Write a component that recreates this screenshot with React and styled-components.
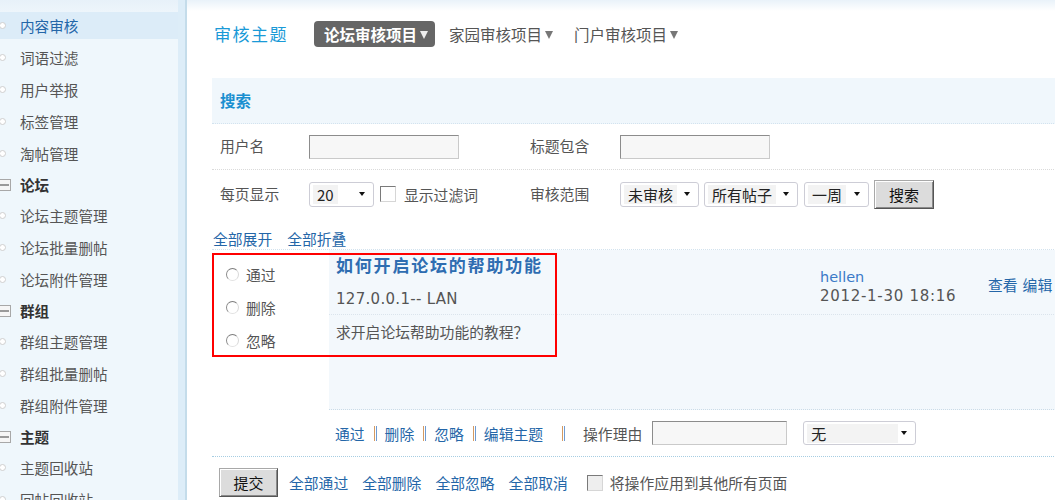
import React from "react";
import styled, { createGlobalStyle } from "styled-components";

const GlobalStyle = createGlobalStyle`
  html, body {
    margin: 0;
    padding: 0;
    background: #fff;
    overflow: hidden;
  }
  body {
    font-family: "Noto Sans CJK SC", "Liberation Sans", sans-serif;
    font-size: 14.8px;
    color: #555;
  }
`;

const sideMenu = [
  { type: "item", label: "内容审核", active: true },
  { type: "item", label: "词语过滤" },
  { type: "item", label: "用户举报" },
  { type: "item", label: "标签管理" },
  { type: "item", label: "淘帖管理" },
  { type: "group", label: "论坛" },
  { type: "item", label: "论坛主题管理" },
  { type: "item", label: "论坛批量删帖" },
  { type: "item", label: "论坛附件管理" },
  { type: "group", label: "群组" },
  { type: "item", label: "群组主题管理" },
  { type: "item", label: "群组批量删帖" },
  { type: "item", label: "群组附件管理" },
  { type: "group", label: "主题" },
  { type: "item", label: "主题回收站" },
  { type: "item", label: "回帖回收站" },
];

const App = () => {
  return (
    <>
      <GlobalStyle />
      <Page>
        <Sidebar>
          {sideMenu.map((m) =>
            m.type === "group" ? (
              <MenuGroup key={m.label}>{m.label}</MenuGroup>
            ) : (
              <MenuItem key={m.label} $active={m.active}>
                {m.label}
              </MenuItem>
            )
          )}
        </Sidebar>
        <SideEdge />
        <Main>
          <Content>
            <HeaderRow>
              <PageTitle>审核主题</PageTitle>
              <Tab $active>
                论坛审核项目<Caret $active />
              </Tab>
              <Tab>
                家园审核项目<Caret />
              </Tab>
              <Tab>
                门户审核项目<Caret />
              </Tab>
            </HeaderRow>

            <SearchHead>搜索</SearchHead>
            <FormRow $h={45} $line>
              <Label>用户名</Label>
              <div>
                <TextInput $w={150} />
              </div>
              <Label>标题包含</Label>
              <div>
                <TextInput $w={150} />
              </div>
            </FormRow>
            <FormRow $h={48}>
              <Label>每页显示</Label>
              <Inline>
                <Select $w={65}>
                  <SelectValue>20</SelectValue>
                  <Arrow />
                </Select>
                <Check $ml={6} />
                <CheckText>显示过滤词</CheckText>
              </Inline>
              <Label>审核范围</Label>
              <Inline>
                <Select $w={79}>
                  <SelectValue>未审核</SelectValue>
                  <Arrow />
                </Select>
                <Select $w={94} $ml={5}>
                  <SelectValue>所有帖子</SelectValue>
                  <Arrow />
                </Select>
                <Select $w={65} $ml={6}>
                  <SelectValue>一周</SelectValue>
                  <Arrow />
                </Select>
                <Button $w={60} $ml={5}>
                  搜索
                </Button>
              </Inline>
            </FormRow>

            <ToggleRow>
              <Link>全部展开</Link>
              <Link>全部折叠</Link>
            </ToggleRow>

            <PostBlock>
              <RadioCol>
                <RadioRow>
                  <Radio />
                  通过
                </RadioRow>
                <RadioRow>
                  <Radio />
                  删除
                </RadioRow>
                <RadioRow>
                  <Radio />
                  忽略
                </RadioRow>
              </RadioCol>
              <PostBody>
                <PostTop>
                  <PostMain>
                    <PostTitle>如何开启论坛的帮助功能</PostTitle>
                    <PostIp>127.0.0.1-- LAN</PostIp>
                  </PostMain>
                  <AuthorCol>
                    <Author>hellen</Author>
                    <PostDate>2012-1-30 18:16</PostDate>
                  </AuthorCol>
                  <OpsCol>
                    <Link>查看</Link>
                    <Link>编辑</Link>
                  </OpsCol>
                </PostTop>
                <PostMessage>求开启论坛帮助功能的教程？</PostMessage>
              </PostBody>
              <Highlight />
            </PostBlock>

            <ActionRow>
              <Link>通过</Link>
              <Sep />
              <Link>删除</Link>
              <Sep />
              <Link>忽略</Link>
              <Sep />
              <Link>编辑主题</Link>
              <Sep $wide />
              <span>操作理由</span>
              <TextInput $w={135} $ml={10} />
              <Select $w={113} $ml={16} $h={24}>
                <SelectValue $grow>无</SelectValue>
                <Arrow />
              </Select>
            </ActionRow>

            <SubmitRow>
              <Button $w={59}>提交</Button>
              <Link>全部通过</Link>
              <Link>全部删除</Link>
              <Link>全部忽略</Link>
              <Link>全部取消</Link>
              <Check $ml={5} $grey />
              <CheckText $ml={-7}>将操作应用到其他所有页面</CheckText>
            </SubmitRow>
          </Content>
        </Main>
      </Page>
    </>
  );
};

// Layout
const Page = styled.div`
  display: flex;
  width: 1055px;
  height: 500px;
  overflow: hidden;
`;

const Sidebar = styled.aside`
  flex: 0 0 178px;
  height: 500px;
  box-sizing: border-box;
  padding-top: 12px;
  overflow: hidden;
  background: linear-gradient(#e7f1f9, #edf5fb 12px, #eff7fc 12px);
`;

const MenuItem = styled.div`
  position: relative;
  height: 27px;
  line-height: 27px;
  margin-bottom: 5px;
  padding-left: 20px;
  font-size: 14.6px;
  color: ${({ $active }) => ($active ? "#2366a8" : "#555")};
  background: ${({ $active }) => ($active ? "#dcecf8" : "transparent")};

  &::before {
    content: "";
    position: absolute;
    left: -1px;
    top: 10px;
    width: 5px;
    height: 5px;
    border: 1px solid #cfcfcf;
    border-radius: 50%;
    background: #fff;
  }
`;

const MenuGroup = styled.div`
  position: relative;
  height: 25px;
  line-height: 25px;
  margin-bottom: 5px;
  padding-left: 20px;
  font-size: 14.6px;
  font-weight: bold;
  color: #333;

  &::before {
    content: "";
    position: absolute;
    left: -2px;
    top: 7px;
    width: 11px;
    height: 10px;
    border: 1px solid #a8a8a8;
    background: #f6f6f6;
  }
  &::after {
    content: "";
    position: absolute;
    left: 0;
    top: 12px;
    width: 9px;
    height: 2px;
    background: #9a9a9a;
  }
`;

const SideEdge = styled.div`
  flex: 0 0 7px;
  background: #ddedf8;
  border-right: 2px solid #c4dcea;
`;

const Main = styled.main`
  flex: 1;
  min-width: 0;
  overflow: hidden;
  padding: 20px 0 0 25px;
  background: linear-gradient(#e9f2f9, #fff 11px);
`;

const Content = styled.div`
  width: 880px;
`;

// Header tabs
const HeaderRow = styled.div`
  display: flex;
  align-items: center;
  height: 27px;
  gap: 4px;
`;

const PageTitle = styled.h1`
  margin: 0 22px 0 2px;
  font-size: 17px;
  font-weight: normal;
  letter-spacing: 1.5px;
  color: #1a9ad7;
`;

const Tab = styled.div`
  display: flex;
  align-items: center;
  height: 26px;
  padding: 0 7px 0 10px;
  border-radius: 4px;
  font-size: 15.5px;
  font-weight: ${({ $active }) => ($active ? "bold" : "normal")};
  color: ${({ $active }) => ($active ? "#fff" : "#555")};
  background: ${({ $active }) => ($active ? "#666" : "transparent")};
`;

const Caret = styled.span`
  margin: 3px 0 0 3px;
  width: 0;
  height: 0;
  border-left: 4px solid transparent;
  border-right: 4px solid transparent;
  border-top: 8px solid ${({ $active }) => ($active ? "#eee" : "#777")};
`;

// Search form
const SearchHead = styled.div`
  margin-top: 31px;
  height: 45px;
  line-height: 45px;
  padding-left: 8px;
  background: #f0f7fc;
  border-bottom: 1px dotted #d3e3ef;
  font-size: 15.5px;
  font-weight: bold;
  color: #1a8fd0;
`;

const FormRow = styled.div`
  display: grid;
  grid-template-columns: 97px 213px 98px 1fr;
  align-items: center;
  height: ${({ $h }) => $h}px;
  border-bottom: ${({ $line }) => ($line ? "1px dotted #dadada" : "none")};
`;

const Label = styled.div`
  padding-left: 8px;
  margin-top: -2px;
`;

const Inline = styled.div`
  display: flex;
  align-items: center;
`;

const TextInput = styled.div`
  box-sizing: border-box;
  width: ${({ $w }) => $w}px;
  height: 24px;
  margin-left: ${({ $ml }) => $ml || 0}px;
  background: #f7f7f7;
  border: 1px solid;
  border-color: #8c8c8c #cacaca #cacaca #8c8c8c;
`;

const Select = styled.div`
  box-sizing: border-box;
  display: flex;
  align-items: center;
  justify-content: space-between;
  width: ${({ $w }) => $w}px;
  height: ${({ $h }) => $h || 25}px;
  margin-left: ${({ $ml }) => $ml || 0}px;
  padding: 0 8px 0 3px;
  background: #fff;
  border: 1px solid #cdcdd6;
  border-radius: 3px;
`;

const SelectValue = styled.span`
  flex: ${({ $grow }) => ($grow ? "0 0 83px" : "0 0 auto")};
  padding: 0 4px;
  line-height: 19px;
  font-size: 15px;
  color: #222;
  background: #f3f3f3;
`;

const Arrow = styled.span`
  width: 0;
  height: 0;
  border-left: 3.5px solid transparent;
  border-right: 3.5px solid transparent;
  border-top: 4px solid #111;
`;

const Check = styled.span`
  box-sizing: border-box;
  width: 16px;
  height: 16px;
  margin-left: ${({ $ml }) => $ml || 0}px;
  background: ${({ $grey }) => ($grey ? "#eeeeee" : "#fff")};
  border: 1px solid;
  border-color: #7a7a7a #d6d6d6 #d6d6d6 #7a7a7a;
`;

const CheckText = styled.span`
  margin-left: ${({ $ml }) => ($ml === undefined ? 8 : $ml)}px;
`;

const Button = styled.div`
  box-sizing: border-box;
  display: flex;
  align-items: center;
  justify-content: center;
  width: ${({ $w }) => $w}px;
  height: 29px;
  margin-left: ${({ $ml }) => $ml || 0}px;
  font-size: 15px;
  color: #111;
  background: #dcdcdc;
  border: 1px solid;
  border-color: #a8a8a8 #555 #555 #a8a8a8;
  box-shadow: inset 1px 1px #fff, inset -1px -1px #8a8a8a;
`;

const Link = styled.a`
  color: #2466a8;
  text-decoration: none;
  cursor: pointer;
`;

const ToggleRow = styled.div`
  display: flex;
  align-items: flex-end;
  gap: 15px;
  height: 31px;
  padding-left: 1px;
  line-height: 20px;
  border-bottom: 1px dotted #d2e2ee;
`;

// Post
const PostBlock = styled.div`
  position: relative;
  display: flex;
`;

const RadioCol = styled.div`
  flex: 0 0 117px;
  box-sizing: border-box;
  padding: 8px 0 0 14px;
`;

const RadioRow = styled.div`
  display: flex;
  align-items: center;
  height: 33px;
`;

const Radio = styled.span`
  box-sizing: border-box;
  width: 13px;
  height: 13px;
  margin-right: 7px;
  border-radius: 50%;
  background: #fff;
  border: 1px solid;
  border-color: #7d7d7d #d8d8d8 #e2e2e2 #8a8a8a;
`;

const PostBody = styled.div`
  flex: 1;
  background: #f3f8fc;
  border-bottom: 1px dotted #cadbe7;
`;

const PostTop = styled.div`
  display: flex;
  height: 64px;
  border-bottom: 1px dotted #dbe4ec;
`;

const PostMain = styled.div`
  flex: 0 0 491px;
  box-sizing: border-box;
  padding: 4px 0 0 7px;
`;

const PostTitle = styled.div`
  line-height: 22px;
  font-size: 17px;
  font-weight: bold;
  letter-spacing: 1.8px;
  color: #2e6db1;
`;

const PostIp = styled.div`
  margin-top: 12px;
  line-height: 22px;
  font-family: "DejaVu Sans", sans-serif;
  font-size: 15px;
  letter-spacing: 0.3px;
  color: #555;
`;

const AuthorCol = styled.div`
  flex: 0 0 168px;
  padding-top: 18px;
  font-family: "DejaVu Sans", sans-serif;
  line-height: 19px;
`;

const Author = styled.div`
  font-size: 14.5px;
  color: #3a7ac8;
`;

const PostDate = styled.div`
  font-size: 15px;
  letter-spacing: 0.7px;
  color: #555;
`;

const OpsCol = styled.div`
  display: flex;
  gap: 5px;
  padding-top: 25px;
  line-height: 20px;
`;

const PostMessage = styled.div`
  height: 94px;
  box-sizing: border-box;
  padding: 7px 7px;
  line-height: 20px;
  color: #555;
`;

const Highlight = styled.div`
  position: absolute;
  left: 0;
  top: 3px;
  width: 345px;
  height: 104px;
  box-sizing: border-box;
  border: 2px solid #f00;
  pointer-events: none;
`;

// Actions
const ActionRow = styled.div`
  display: flex;
  align-items: center;
  height: 46px;
  padding-left: 123px;
  border-bottom: 1px dotted #a6cde2;
`;

const Sep = styled.span`
  width: 1px;
  height: 15px;
  margin: ${({ $wide }) => ($wide ? "0 18px 0 19px" : "0 8px 0 9px")};
  border-left: 1px solid #d49a62;
  border-right: 1px solid #6f9bd1;
`;

const SubmitRow = styled.div`
  display: flex;
  align-items: center;
  gap: 14px;
  height: 29px;
  margin-top: 11px;
  padding-left: 7px;

  & > ${Button} {
    margin-right: -3px;
  }
`;

export default App;
